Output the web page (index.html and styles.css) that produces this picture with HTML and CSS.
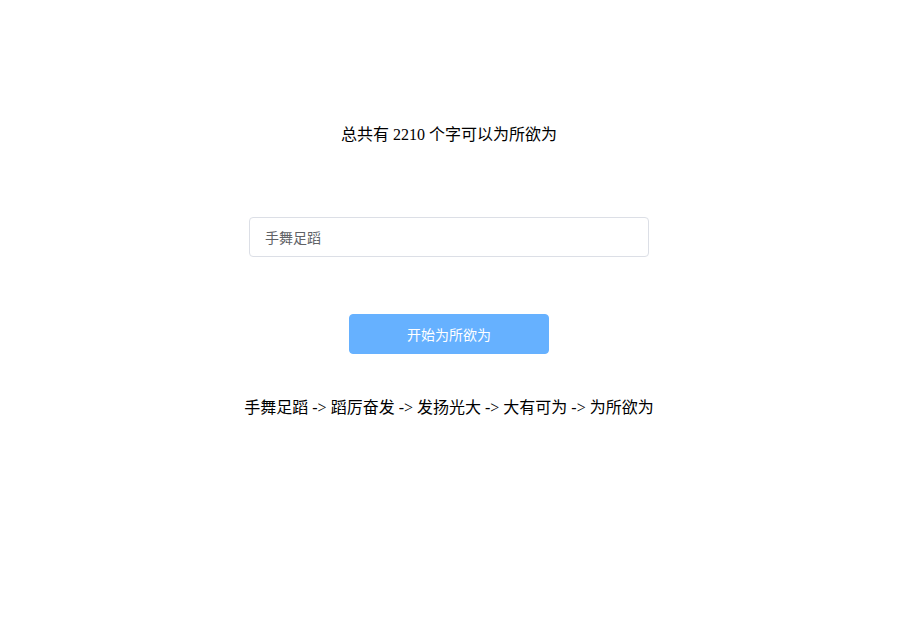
FILE: index.html
```html
<!DOCTYPE html>
<html lang="zh-CN">
<head>
<meta charset="utf-8">
<title>为所欲为</title>
<link rel="stylesheet" href="styles.css">
</head>
<body>
<div class="page">
  <div class="total">总共有 2210 个字可以为所欲为</div>
  <div class="field">
    <input class="input" type="text" value="手舞足蹈">
  </div>
  <button class="btn" type="button">开始为所欲为</button>
  <div class="chain">手舞足蹈 -&gt; 蹈厉奋发 -&gt; 发扬光大 -&gt; 大有可为 -&gt; 为所欲为</div>
</div>
</body>
</html>
```
FILE: styles.css
```css
html, body {
  margin: 0;
  padding: 0;
  background: #fff;
}
body {
  font-family: "Liberation Serif", "Noto Sans CJK SC", serif;
  font-size: 16px;
  color: #000;
}
.page {
  width: 898px;
  display: flex;
  flex-direction: column;
  align-items: center;
  padding-top: 123px;
}
.total {
  line-height: 24px;
  height: 24px;
}
.field {
  margin-top: 70px;
  width: 400px;
}
.input {
  box-sizing: border-box;
  width: 400px;
  height: 40px;
  border: 1px solid #dcdfe6;
  border-radius: 4px;
  padding: 0 15px;
  font-family: "Noto Sans CJK SC", sans-serif;
  font-size: 14px;
  color: #606266;
  background: #fff;
  outline: none;
  margin: 0;
}
.btn {
  margin-top: 57px;
  width: 200px;
  height: 40px;
  border: 1px solid #66b1ff;
  background: #66b1ff;
  color: #fff;
  border-radius: 4px;
  font-family: "Noto Sans CJK SC", sans-serif;
  font-size: 14px;
  padding: 0;
  cursor: pointer;
}
.chain {
  margin-top: 42px;
  line-height: 24px;
  height: 24px;
  white-space: pre;
}
```
